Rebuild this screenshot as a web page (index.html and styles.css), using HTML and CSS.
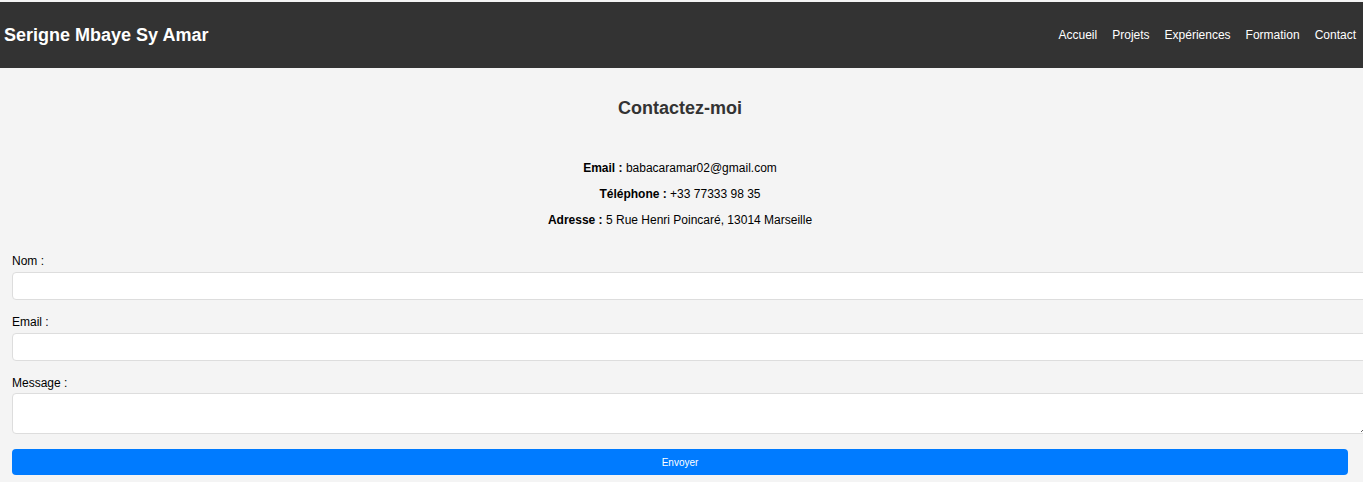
FILE: index.html
```html
<!DOCTYPE html>
<html lang="fr">
<head>
<meta charset="utf-8">
<title>Contact - Serigne Mbaye Sy Amar</title>
<link rel="stylesheet" href="styles.css">
</head>
<body>
<header class="site-header">
  <div class="brand">Serigne Mbaye Sy Amar</div>
  <nav class="nav">
    <a href="#">Accueil</a>
    <a href="#">Projets</a>
    <a href="#">Expériences</a>
    <a href="#">Formation</a>
    <a href="#">Contact</a>
  </nav>
</header>
<main class="contact">
  <h2 class="contact-title">Contactez-moi</h2>
  <div class="info">
    <p><strong>Email :</strong> babacaramar02@gmail.com</p>
    <p><strong>Téléphone :</strong> +33 77333 98 35</p>
    <p><strong>Adresse :</strong> 5 Rue Henri Poincaré, 13014 Marseille</p>
  </div>
  <form class="form">
    <label class="label" for="nom">Nom :</label>
    <input class="field" type="text" id="nom">
    <label class="label" for="email">Email :</label>
    <input class="field" type="email" id="email">
    <label class="label" for="message">Message :</label>
    <textarea class="field area" id="message"></textarea>
    <button class="submit" type="button">Envoyer</button>
  </form>
</main>
</body>
</html>
```
FILE: styles.css
```css
html, body {
  margin: 0;
  padding: 0;
}
body {
  padding-top: 2px;
  background: #f4f4f4;
  font-family: "Liberation Sans", Arial, sans-serif;
  color: #000;
}
.site-header {
  display: flex;
  align-items: center;
  justify-content: space-between;
  height: 66px;
  padding: 0 7px 0 4px;
  background: #333;
  color: #fff;
}
.brand {
  font-size: 18px;
  font-weight: bold;
}
.nav {
  display: flex;
  gap: 15px;
  font-size: 12px;
  margin-top: -1px;
}
.nav a {
  color: #fff;
  text-decoration: none;
}
.contact {
  padding: 0 15px 0 12px;
}
.contact-title {
  margin: 30px 0 42px;
  text-align: center;
  font-size: 18px;
  color: #333;
}
.info {
  text-align: center;
  font-size: 12px;
}
.info p {
  margin: 0 0 12px;
}
.form {
  margin-top: 27px;
  font-size: 12px;
}
.label {
  display: block;
  margin-bottom: 4px;
}
.field {
  display: block;
  width: 100%;
  height: 14px;
  padding: 6px 10px;
  margin: 0 0 15px;
  border: 1px solid #ddd;
  border-radius: 4px;
  background: #fff;
  font-family: inherit;
  font-size: 12px;
}
.label + .area {
  margin-top: -1px;
}
.area {
  height: 27px;
  margin-bottom: 15px;
}
.submit {
  display: block;
  width: 100%;
  height: 26px;
  padding: 0;
  border: 0;
  border-radius: 4px;
  background: #007bff;
  color: #fff;
  font-family: inherit;
  font-size: 10px;
}
```
